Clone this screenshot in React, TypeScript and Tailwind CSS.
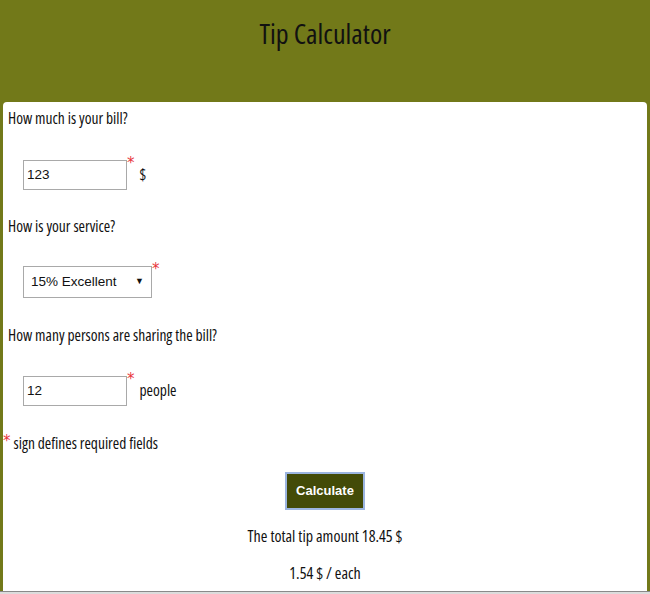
import React from 'react';

const Req: React.FC = () => (
  <span className="self-start -mt-[4px] text-[15px] leading-[15px] text-[#e8363b] font-['DejaVu_Sans',sans-serif] [font-stretch:normal]">*</span>
);

export default function App() {
  return (
    <div className="h-[594px] overflow-hidden flex flex-col bg-[#727919] text-[#111] font-['Open_Sans',sans-serif] [font-stretch:condensed]">
      {/* Header */}
      <div className="h-[102px] shrink-0 flex justify-center pt-[14px]">
        <h1 className="text-[28px] leading-[38px] text-[#111]">Tip Calculator</h1>
      </div>

      {/* Card */}
      <div className="flex-1 mx-[3px] bg-white rounded-t-[4px] flex flex-col text-[15.5px]">
        <p className="mt-[4px] pl-[5px] h-6 leading-6">How much is your bill?</p>
        <div className="mt-[30px] ml-[20px] flex items-center">
          <div className="w-[104px] h-[30px] border border-[#a9a9a9] flex items-center pl-[3px] text-[13.5px] font-['Liberation_Sans',sans-serif] [font-stretch:normal]">123</div>
          <Req />
          <span className="ml-[5px]">$</span>
        </div>

        <p className="mt-[24px] pl-[5px] h-6 leading-6">How is your service?</p>
        <div className="mt-[28px] ml-[20px] flex items-center">
          <div className="w-[129px] h-[32px] border border-[#a9a9a9] flex items-center justify-between pl-[7px] pr-[7px] text-[13.5px] font-['Liberation_Sans',sans-serif] [font-stretch:normal]">
            <span>15% Excellent</span>
            <span className="text-[9px]">▼</span>
          </div>
          <Req />
        </div>

        <p className="mt-[25px] pl-[5px] h-6 leading-6">How many persons are sharing the bill?</p>
        <div className="mt-[29px] ml-[20px] flex items-center">
          <div className="w-[104px] h-[30px] border border-[#a9a9a9] flex items-center pl-[3px] text-[13.5px] font-['Liberation_Sans',sans-serif] [font-stretch:normal]">12</div>
          <Req />
          <span className="ml-[5px]">people</span>
        </div>

        <p className="mt-[25px] h-6 leading-6 flex items-center">
          <span className="text-[15px] leading-[15px] text-[#e8363b] -mt-[4px] font-['DejaVu_Sans',sans-serif] [font-stretch:normal]">*</span>
          <span className="ml-[3px]">sign defines required fields</span>
        </p>

        <div className="mt-[17px] flex justify-center">
          <button className="w-[80px] h-[38px] bg-[#434b08] border-2 border-[#9cb5e0] text-white text-[13px] font-bold font-['Liberation_Sans',sans-serif] [font-stretch:normal]">
            Calculate
          </button>
        </div>

        <p className="mt-[14px] h-6 leading-6 text-center text-[16px]">The total tip amount 18.45 $</p>
        <p className="mt-[13px] h-6 leading-6 text-center text-[16px]">1.54 $ / each</p>
      </div>

      <div className="h-[3px] shrink-0 bg-[#dcdcdc] border-t border-[#8a8a8a]" />
    </div>
  );
}
